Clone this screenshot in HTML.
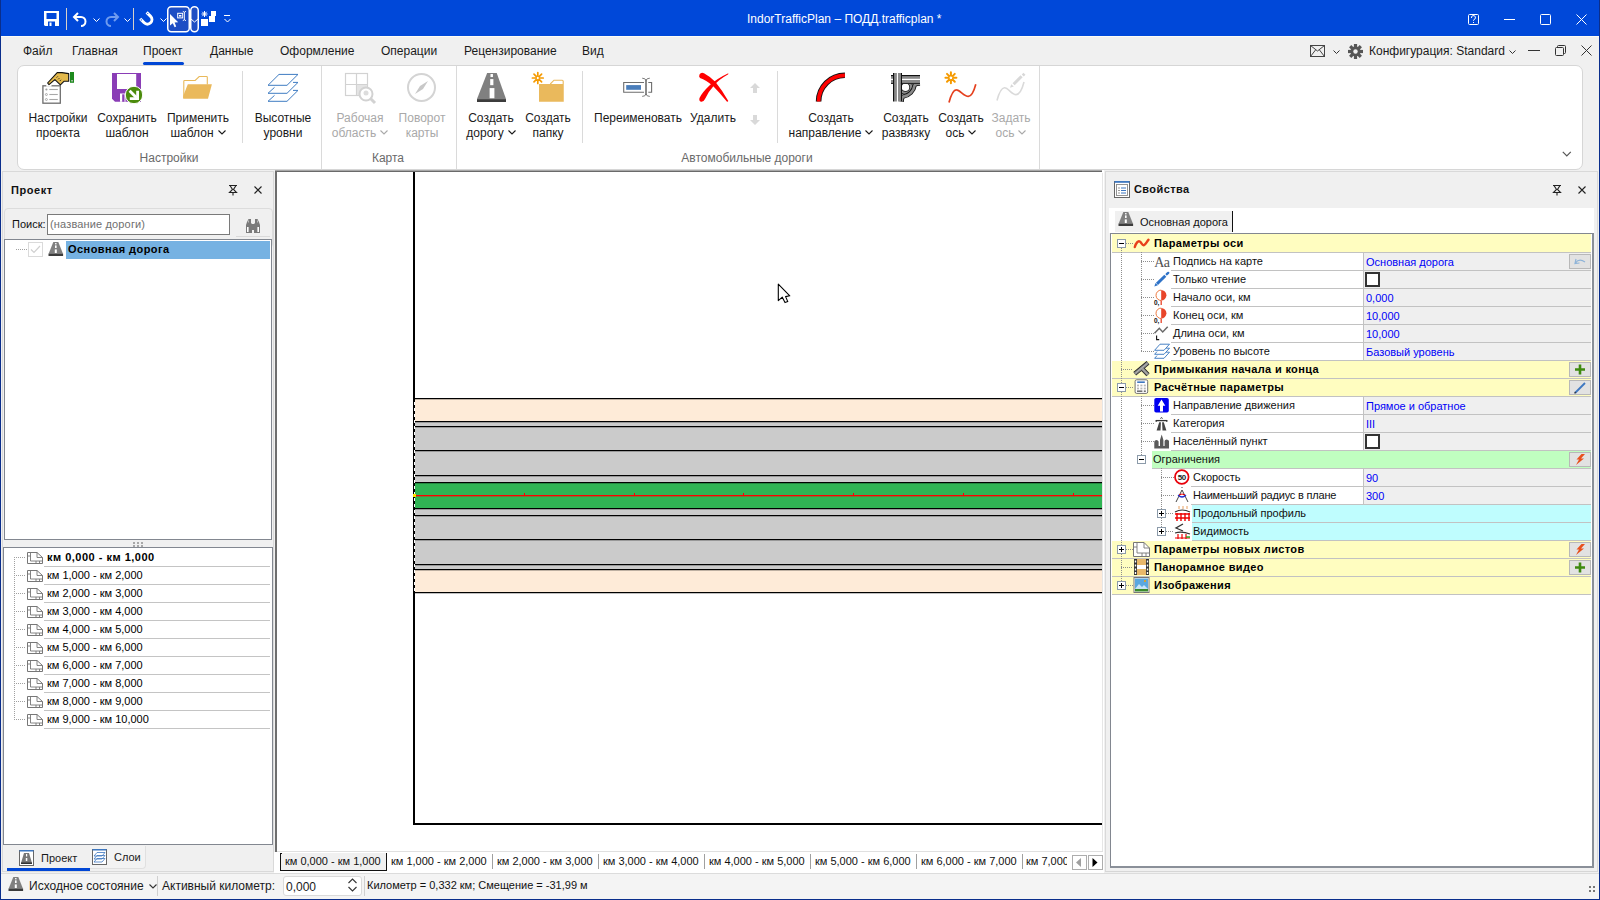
<!DOCTYPE html><html><head><meta charset="utf-8"><style>
html,body{margin:0;padding:0;width:1600px;height:900px;overflow:hidden;background:#F0F0F0;}
body{position:relative;font-family:"Liberation Sans", sans-serif;}
.t{position:absolute;white-space:nowrap;line-height:1;}
svg{overflow:visible;}
</style></head><body>
<div style="position:absolute;left:0px;top:0px;width:1600px;height:36px;background:#0048D9;"></div>
<div style="position:absolute;left:0px;top:0px;width:1px;height:900px;background:#0A2E8C;"></div>
<div style="position:absolute;left:1599px;top:0px;width:1px;height:900px;background:#0A2E8C;"></div>
<div style="position:absolute;left:0px;top:899px;width:1600px;height:1px;background:#0A2E8C;"></div>
<svg style="position:absolute;left:44px;top:11px;" width="16" height="16" viewBox="0 0 16 16"><path d="M0 0H15V15H1L0 14Z" fill="#fff"/><rect x="2.5" y="2" width="10" height="6" fill="#0048D9"/><rect x="4" y="10.5" width="7" height="4.5" fill="#0048D9"/><rect x="5.5" y="11.5" width="2" height="3.5" fill="#fff"/></svg>
<div style="position:absolute;left:66px;top:8px;width:1px;height:22px;background:#D8D0C8;"></div>
<svg style="position:absolute;left:72px;top:11px;" width="16" height="16" viewBox="0 0 16 16"><path d="M6 2 L2 6 L6 10 M2.5 6 H9 A4.5 4.5 0 0 1 9 15" fill="none" stroke="#fff" stroke-width="2"/></svg>
<svg style="position:absolute;left:93px;top:18px;" width="7" height="4" viewBox="0 0 7 4"><path d="M0.5 0.5 L3.5 3.5 L6.5 0.5" fill="none" stroke="#fff" stroke-width="1"/></svg>
<svg style="position:absolute;left:104px;top:11px;" width="16" height="16" viewBox="0 0 16 16"><path d="M10 2 L14 6 L10 10 M13.5 6 H7 A4.5 4.5 0 0 0 7 15" fill="none" stroke="#6E9BEF" stroke-width="2"/></svg>
<svg style="position:absolute;left:124px;top:18px;" width="7" height="4" viewBox="0 0 7 4"><path d="M0.5 0.5 L3.5 3.5 L6.5 0.5" fill="none" stroke="#fff" stroke-width="1"/></svg>
<div style="position:absolute;left:133px;top:8px;width:1px;height:22px;background:#D8D0C8;"></div>
<svg style="position:absolute;left:137px;top:10px;" width="16" height="16" viewBox="0 0 16 16"><path d="M3.2 8.8 L7.2 12.8 A 4.5 4.5 0 0 0 13.6 6.4 L9.6 2.4" fill="none" stroke="#fff" stroke-width="3"/><circle cx="4.3" cy="9.9" r="0.6" fill="#0048D9"/><circle cx="10.7" cy="3.5" r="0.6" fill="#0048D9"/></svg>
<svg style="position:absolute;left:160px;top:18px;" width="7" height="4" viewBox="0 0 7 4"><path d="M0.5 0.5 L3.5 3.5 L6.5 0.5" fill="none" stroke="#fff" stroke-width="1"/></svg>
<svg style="position:absolute;left:167px;top:6px;" width="23" height="27" viewBox="0 0 23 27"><rect x="0.75" y="0.75" width="21.5" height="25" rx="3.5" fill="#1E4EC4" stroke="#fff" stroke-width="1.5"/><path d="M3 8 V19.5 L5.8 17.2 L7.6 21.2 L9.2 20.6 L7.6 16.6 L11.2 16.2 Z" fill="#fff"/><rect x="10.7" y="7.3" width="5" height="4.6" fill="none" stroke="#fff" stroke-width="1"/><rect x="12" y="9" width="2.4" height="1.6" fill="#fff"/><path d="M15.8 5.4 Q17.2 5.4 17.4 6.8 V13.2 Q17.2 14.6 15.8 14.6 M19 5.4 Q17.6 5.4 17.4 6.8 M17.4 13.2 Q17.6 14.6 19 14.6" fill="none" stroke="#fff" stroke-width="0.9"/></svg>
<svg style="position:absolute;left:190px;top:6px;" width="9" height="27" viewBox="0 0 9 27"><rect x="0.75" y="0.75" width="7.5" height="25" rx="3.7" fill="#1E4EC4" stroke="#fff" stroke-width="1.5"/><path d="M1 13 L4.5 16 L8 13" fill="none" stroke="#fff" stroke-width="1"/></svg>
<svg style="position:absolute;left:201px;top:11px;" width="16" height="16" viewBox="0 0 16 16"><rect x="0" y="8" width="7" height="7" fill="#fff"/><rect x="8" y="5" width="6" height="6" fill="#fff"/><rect x="10" y="0" width="5" height="5" fill="#fff"/><path d="M3.5 0 V6 M0.5 3 H6.5 M1.3 0.8 L5.7 5.2 M5.7 0.8 L1.3 5.2" stroke="#fff" stroke-width="1"/></svg>
<svg style="position:absolute;left:224px;top:15px;" width="7" height="8" viewBox="0 0 7 8"><path d="M0 0.5 H6 M0.5 4 L3.5 7 L6.5 4" fill="none" stroke="#fff" stroke-width="1"/></svg>
<div class="t" style="left:747px;top:13px;font-size:12px;color:#fff;font-weight:normal;">IndorTrafficPlan – ПОДД.trafficplan *</div>
<svg style="position:absolute;left:1468px;top:14px;" width="11" height="11" viewBox="0 0 11 11"><rect x="0.5" y="0.5" width="10" height="10" rx="1" fill="none" stroke="#fff" stroke-width="1"/><path d="M3.5 4 A2 2 0 1 1 6 5.5 L5.5 6.5 V7" fill="none" stroke="#fff" stroke-width="1"/><rect x="5" y="8" width="1" height="1" fill="#fff"/></svg>
<div style="position:absolute;left:1504px;top:19px;width:11px;height:1px;background:#fff;"></div>
<svg style="position:absolute;left:1540px;top:14px;" width="11" height="11" viewBox="0 0 11 11"><rect x="0.5" y="0.5" width="10" height="10" rx="1" fill="none" stroke="#fff" stroke-width="1"/></svg>
<svg style="position:absolute;left:1576px;top:14px;" width="11" height="11" viewBox="0 0 11 11"><path d="M0.5 0.5 L10.5 10.5 M10.5 0.5 L0.5 10.5" stroke="#fff" stroke-width="1"/></svg>
<div style="position:absolute;left:1px;top:36px;width:1598px;height:1px;background:#FCFCF6;"></div>
<div class="t" style="left:23px;top:45px;font-size:12px;color:#1A1A1A;font-weight:normal;">Файл</div>
<div class="t" style="left:72px;top:45px;font-size:12px;color:#1A1A1A;font-weight:normal;">Главная</div>
<div class="t" style="left:143px;top:45px;font-size:12px;color:#1A1A1A;font-weight:normal;">Проект</div>
<div class="t" style="left:210px;top:45px;font-size:12px;color:#1A1A1A;font-weight:normal;">Данные</div>
<div class="t" style="left:280px;top:45px;font-size:12px;color:#1A1A1A;font-weight:normal;">Оформление</div>
<div class="t" style="left:381px;top:45px;font-size:12px;color:#1A1A1A;font-weight:normal;">Операции</div>
<div class="t" style="left:464px;top:45px;font-size:12px;color:#1A1A1A;font-weight:normal;">Рецензирование</div>
<div class="t" style="left:582px;top:45px;font-size:12px;color:#1A1A1A;font-weight:normal;">Вид</div>
<div style="position:absolute;left:143px;top:62px;width:41px;height:3px;background:#0046D5;border-radius:2px;"></div>
<svg style="position:absolute;left:1310px;top:45px;" width="16" height="12" viewBox="0 0 16 12"><rect x="0.5" y="0.5" width="14" height="11" fill="none" stroke="#444" stroke-width="1"/><path d="M0.5 0.5 L7.5 6 L14.5 0.5 M0.5 11.5 L5.5 5 M14.5 11.5 L9.5 5" fill="none" stroke="#444" stroke-width="1"/></svg>
<svg style="position:absolute;left:1333px;top:50px;" width="7" height="4" viewBox="0 0 7 4"><path d="M0.5 0.5 L3.5 3.5 L6.5 0.5" fill="none" stroke="#333" stroke-width="1"/></svg>
<svg style="position:absolute;left:1348px;top:44px;" width="15" height="15" viewBox="0 0 15 15"><g transform="translate(7.5,7.5)"><circle r="5" fill="#555"/><g fill="#555"><rect x="-1.6" y="-7.5" width="3.2" height="4" transform="rotate(0)"/><rect x="-1.6" y="-7.5" width="3.2" height="4" transform="rotate(45)"/><rect x="-1.6" y="-7.5" width="3.2" height="4" transform="rotate(90)"/><rect x="-1.6" y="-7.5" width="3.2" height="4" transform="rotate(135)"/><rect x="-1.6" y="-7.5" width="3.2" height="4" transform="rotate(180)"/><rect x="-1.6" y="-7.5" width="3.2" height="4" transform="rotate(225)"/><rect x="-1.6" y="-7.5" width="3.2" height="4" transform="rotate(270)"/><rect x="-1.6" y="-7.5" width="3.2" height="4" transform="rotate(315)"/></g><circle r="2.2" fill="#F0F0F0"/></g></svg>
<div class="t" style="left:1369px;top:45px;font-size:12px;color:#1A1A1A;font-weight:normal;">Конфигурация: Standard</div>
<svg style="position:absolute;left:1509px;top:50px;" width="7" height="4" viewBox="0 0 7 4"><path d="M0.5 0.5 L3.5 3.5 L6.5 0.5" fill="none" stroke="#333" stroke-width="1"/></svg>
<div style="position:absolute;left:1528px;top:50px;width:12px;height:1px;background:#333;"></div>
<svg style="position:absolute;left:1555px;top:45px;" width="11" height="11" viewBox="0 0 11 11"><rect x="0.5" y="2.5" width="8" height="8" rx="1" fill="none" stroke="#333"/><path d="M2.5 2.5 V1.5 Q2.5 0.5 3.5 0.5 H9.5 Q10.5 0.5 10.5 1.5 V7.5 Q10.5 8.5 9.5 8.5 H8.5" fill="none" stroke="#333"/></svg>
<svg style="position:absolute;left:1581px;top:45px;" width="11" height="11" viewBox="0 0 11 11"><path d="M0.5 0.5 L10.5 10.5 M10.5 0.5 L0.5 10.5" stroke="#333" stroke-width="1"/></svg>
<div style="position:absolute;left:17px;top:65px;width:1566px;height:105px;background:#fff;border:1px solid #D6D6D6;border-radius:7px;box-sizing:border-box;"></div>
<div style="position:absolute;left:242px;top:71px;width:1px;height:72px;background:#DADADA;"></div>
<div style="position:absolute;left:582px;top:71px;width:1px;height:72px;background:#DADADA;"></div>
<div style="position:absolute;left:777px;top:71px;width:1px;height:72px;background:#DADADA;"></div>
<div style="position:absolute;left:321px;top:66px;width:1px;height:103px;background:#DADADA;"></div>
<div style="position:absolute;left:456px;top:66px;width:1px;height:103px;background:#DADADA;"></div>
<div style="position:absolute;left:1039px;top:66px;width:1px;height:103px;background:#DADADA;"></div>
<div class="t" style="left:19px;width:300px;text-align:center;top:152px;font-size:12px;color:#6A6A6A;font-weight:normal;">Настройки</div>
<div class="t" style="left:238px;width:300px;text-align:center;top:152px;font-size:12px;color:#6A6A6A;font-weight:normal;">Карта</div>
<div class="t" style="left:597px;width:300px;text-align:center;top:152px;font-size:12px;color:#6A6A6A;font-weight:normal;">Автомобильные дороги</div>
<svg style="position:absolute;left:38px;top:68px;" width="40" height="40" viewBox="0 0 40 40">
<rect x="4.9" y="17.8" width="17.4" height="17.4" fill="#fff" stroke="#6E6E6E" stroke-width="1.3"/>
<rect x="8.3" y="16.5" width="5.2" height="2.2" fill="#fff"/>
<circle cx="8.4" cy="21.5" r="1.1" fill="#A0A0A0"/><path d="M11.3 21.5 H19.8" stroke="#A8A8A8" stroke-width="1.1"/>
<circle cx="8.4" cy="26.5" r="1" fill="#fff" stroke="#999" stroke-width="0.8"/><path d="M11.3 26.5 H19.8" stroke="#A8A8A8" stroke-width="1.1"/>
<circle cx="8.4" cy="31.5" r="1" fill="#fff" stroke="#999" stroke-width="0.8"/><path d="M11.3 31.5 H19.8" stroke="#A8A8A8" stroke-width="1.1"/>
<path d="M9.6 15 L19.2 4.6 H24 L30.7 5.6 V13.2 H26.2 L22.4 16.8 L16.9 11.6 L11 16.6 Z" fill="#E3B94C" stroke="#111" stroke-width="1.1" stroke-linejoin="round"/>
<path d="M18.6 9.6 L19.8 8.4 M20.2 11.3 L21.4 10.1 M21.8 13 L23 11.8" stroke="#222" stroke-width="0.9"/>
<rect x="32" y="4" width="4" height="10.8" fill="#1E8A1E"/><rect x="33.3" y="12" width="1.5" height="1.5" fill="#C8C8C8"/>
</svg>
<div class="t" style="left:-92px;width:300px;text-align:center;top:112px;font-size:12px;color:#1A1A1A;font-weight:normal;">Настройки</div>
<div class="t" style="left:-92px;width:300px;text-align:center;top:127px;font-size:12px;color:#1A1A1A;font-weight:normal;">проекта</div>
<svg style="position:absolute;left:106px;top:68px;" width="40" height="40" viewBox="0 0 40 40">
<path d="M6 5 H35 V33.8 H9 L6 30.8 Z" fill="#8A3DB6"/>
<rect x="11" y="6" width="19.2" height="15" fill="#fff"/>
<rect x="14" y="25.5" width="5.5" height="8.3" fill="#fff"/><rect x="16.2" y="26.3" width="2.3" height="7.5" fill="#8A3DB6"/>
<circle cx="28" cy="27" r="8.7" fill="#4B8B0C" stroke="#fff" stroke-width="1"/>
<path d="M23.6 22.8 L30.3 29.5" stroke="#fff" stroke-width="3"/>
<path d="M23.8 30.6 H31.6 V22.8" fill="none" stroke="#fff" stroke-width="2.8"/>
</svg>
<div class="t" style="left:-23px;width:300px;text-align:center;top:112px;font-size:12px;color:#1A1A1A;font-weight:normal;">Сохранить</div>
<div class="t" style="left:-23px;width:300px;text-align:center;top:127px;font-size:12px;color:#1A1A1A;font-weight:normal;">шаблон</div>
<svg style="position:absolute;left:178px;top:68px;" width="40" height="40" viewBox="0 0 40 40">
<path d="M5.8 30 V13.3 Q5.8 12.5 6.6 12.5 H17.2 L21.2 8.5 H28.5 Q29.3 8.5 29.3 9.3 V16.5" fill="none" stroke="#E9B95A" stroke-width="1.1"/>
<path d="M9.8 16.2 H33.9 L30 30.8 H5.2 V28 Z" fill="#EAB95C"/>
</svg>
<div class="t" style="left:48px;width:300px;text-align:center;top:112px;font-size:12px;color:#1A1A1A;font-weight:normal;">Применить</div>
<div class="t" style="left:48px;width:300px;text-align:center;top:127px;font-size:12px;color:#1A1A1A;font-weight:normal;">шаблон<svg width="8" height="5" style="display:inline-block;vertical-align:middle;margin-left:4px;margin-top:-2px" viewBox="0 0 8 5"><path d="M0.5 0.5 L4 4 L7.5 0.5" fill="none" stroke="#1A1A1A" stroke-width="1.1"/></svg></div>
<svg style="position:absolute;left:263px;top:68px;" width="40" height="40" viewBox="0 0 40 40">
<g fill="none" stroke="#3F7CC2" stroke-width="1">
<path d="M16 6.4 H35 L24 17.3 H5 Z"/>
<path d="M11.5 19.4 L5 25.3 H24 L35 14.4 H30"/>
<path d="M11.5 27.4 L5 33.3 H24 L35 22.4 H30"/>
</g>
</svg>
<div class="t" style="left:133px;width:300px;text-align:center;top:112px;font-size:12px;color:#1A1A1A;font-weight:normal;">Высотные</div>
<div class="t" style="left:133px;width:300px;text-align:center;top:127px;font-size:12px;color:#1A1A1A;font-weight:normal;">уровни</div>
<svg style="position:absolute;left:344px;top:72px;" width="34" height="34" viewBox="0 0 34 34">
<rect x="1.5" y="1.5" width="22" height="22" fill="none" stroke="#D2D2D2" stroke-width="1.2"/>
<path d="M12.5 1.5 V23.5 M1.5 12.5 H23.5" stroke="#D2D2D2" stroke-width="1.2"/>
<rect x="13" y="13" width="10" height="10" fill="#E4E4E4"/>
<circle cx="22" cy="22" r="6.5" fill="#fff" stroke="#D2D2D2" stroke-width="2"/>
<circle cx="22" cy="21" r="2.5" fill="#DDDDDD"/>
<path d="M26.5 26.5 L31 31" stroke="#D2D2D2" stroke-width="3"/>
</svg>
<div class="t" style="left:210px;width:300px;text-align:center;top:112px;font-size:12px;color:#A9A9A9;font-weight:normal;">Рабочая</div>
<div class="t" style="left:210px;width:300px;text-align:center;top:127px;font-size:12px;color:#A9A9A9;font-weight:normal;">область<svg width="8" height="5" style="display:inline-block;vertical-align:middle;margin-left:4px;margin-top:-2px" viewBox="0 0 8 5"><path d="M0.5 0.5 L4 4 L7.5 0.5" fill="none" stroke="#A9A9A9" stroke-width="1.1"/></svg></div>
<svg style="position:absolute;left:406px;top:72px;" width="31" height="31" viewBox="0 0 31 31">
<circle cx="15.5" cy="15.5" r="13.5" fill="none" stroke="#D4D4D4" stroke-width="2"/>
<path d="M22 9 L17 17 L9 22 L14 14 Z" fill="#C8C8C8"/>
</svg>
<div class="t" style="left:272px;width:300px;text-align:center;top:112px;font-size:12px;color:#A9A9A9;font-weight:normal;">Поворот</div>
<div class="t" style="left:272px;width:300px;text-align:center;top:127px;font-size:12px;color:#A9A9A9;font-weight:normal;">карты</div>
<svg style="position:absolute;left:477px;top:73px;" width="29" height="29" viewBox="0 0 29 29">
<path d="M10.149999999999999 0 H19.720000000000002 L29 26.1 H0 Z" fill="#808080"/>
<rect x="0" y="26.1" width="29" height="2.9000000000000004" fill="#3C3C3C"/>
<rect x="13.485000000000001" y="1.0150000000000001" width="2.4650000000000003" height="3.045" fill="#fff"/>
<rect x="13.195" y="6.09" width="3.19" height="6.09" fill="#fff"/>
<rect x="12.615" y="15.08" width="4.785" height="10.149999999999999" fill="#fff"/>
</svg>
<div class="t" style="left:341px;width:300px;text-align:center;top:112px;font-size:12px;color:#1A1A1A;font-weight:normal;">Создать</div>
<div class="t" style="left:341px;width:300px;text-align:center;top:127px;font-size:12px;color:#1A1A1A;font-weight:normal;">дорогу<svg width="8" height="5" style="display:inline-block;vertical-align:middle;margin-left:4px;margin-top:-2px" viewBox="0 0 8 5"><path d="M0.5 0.5 L4 4 L7.5 0.5" fill="none" stroke="#1A1A1A" stroke-width="1.1"/></svg></div>
<svg style="position:absolute;left:531px;top:71px;" width="36" height="34" viewBox="0 0 36 34">
<g stroke="#F59A00" stroke-width="1.7" stroke-linecap="round"><path d="M6.8 1.6 V12.4 M1.4 7 H12.2 M3 3.2 L10.6 10.8 M10.6 3.2 L3 10.8"/></g>
<circle cx="6.8" cy="7" r="1.6" fill="#fff" stroke="#F59A00" stroke-width="0.9"/>
<rect x="8" y="13" width="24.75" height="17.75" fill="#EAB95C"/>
<path d="M19.25 13 L23 9.2 H31.2 Q32.2 9.2 32.2 10.2 V13" fill="none" stroke="#EAB95C" stroke-width="1.1"/>
</svg>
<div class="t" style="left:398px;width:300px;text-align:center;top:112px;font-size:12px;color:#1A1A1A;font-weight:normal;">Создать</div>
<div class="t" style="left:398px;width:300px;text-align:center;top:127px;font-size:12px;color:#1A1A1A;font-weight:normal;">папку</div>
<svg style="position:absolute;left:616px;top:68px;" width="40" height="40" viewBox="0 0 40 40">
<path d="M28 14.5 H7.7 V24.3 H28" fill="none" stroke="#6E6E6E" stroke-width="1.1"/>
<rect x="10.2" y="17.1" width="14.8" height="4.7" fill="#4A7EBB"/>
<path d="M32.3 14.5 H35.6 V24.3 H32.3" fill="none" stroke="#6E6E6E" stroke-width="1.1"/>
<path d="M30 11.5 V27" stroke="#6E6E6E" stroke-width="1.6"/>
<path d="M26.2 10.2 Q29.5 10.2 30 12.5 Q30.5 10.2 33.8 10.2 M26.2 28.4 Q29.5 28.4 30 26 Q30.5 28.4 33.8 28.4" fill="none" stroke="#6E6E6E" stroke-width="0.9"/>
</svg>
<div class="t" style="left:488px;width:300px;text-align:center;top:112px;font-size:12px;color:#1A1A1A;font-weight:normal;">Переименовать</div>
<svg style="position:absolute;left:696px;top:68px;" width="40" height="40" viewBox="0 0 40 40">
<path d="M3.5 6.5 Q5 4 8 5.3 Q14 8.5 19.5 14 Q26 22 32.3 33 Q31.5 34.2 30.8 33.5 Q24 25 17 18 Q10 12 4 10 Q2.5 8.5 3.5 6.5 Z" fill="#FF0000"/>
<path d="M32.3 5.2 Q32.6 6.2 31.5 6.8 Q23 11.5 18 17.5 Q12 24 9 31 Q7.5 34.2 5 33.8 Q2.7 33 3.5 30 Q6 24.5 14 17 Q21 10.5 32.3 5.2 Z" fill="#FF0000"/>
</svg>
<div class="t" style="left:563px;width:300px;text-align:center;top:112px;font-size:12px;color:#1A1A1A;font-weight:normal;">Удалить</div>
<svg style="position:absolute;left:749px;top:82px;" width="12" height="12" viewBox="0 0 12 12"><path d="M6 1 L11 6 H8 V11 H4 V6 H1 Z" fill="#D9D9D9"/></svg>
<svg style="position:absolute;left:749px;top:114px;" width="12" height="12" viewBox="0 0 12 12"><path d="M6 11 L11 6 H8 V1 H4 V6 H1 Z" fill="#D9D9D9"/></svg>
<svg style="position:absolute;left:810px;top:68px;" width="40" height="40" viewBox="0 0 40 40">
<path d="M8.6 33.6 A 26.3 26.3 0 0 1 34.9 7.3" fill="none" stroke="#111" stroke-width="5.6"/>
<path d="M8.6 33.6 A 26.3 26.3 0 0 1 34.9 7.3" fill="none" stroke="#FF0000" stroke-width="3.8"/>
</svg>
<div class="t" style="left:681px;width:300px;text-align:center;top:112px;font-size:12px;color:#1A1A1A;font-weight:normal;">Создать</div>
<div class="t" style="left:681px;width:300px;text-align:center;top:127px;font-size:12px;color:#1A1A1A;font-weight:normal;">направление<svg width="8" height="5" style="display:inline-block;vertical-align:middle;margin-left:4px;margin-top:-2px" viewBox="0 0 8 5"><path d="M0.5 0.5 L4 4 L7.5 0.5" fill="none" stroke="#1A1A1A" stroke-width="1.1"/></svg></div>
<svg style="position:absolute;left:886px;top:68px;" width="40" height="40" viewBox="0 0 40 40">
<g fill="none">
<circle cx="19.5" cy="19.2" r="5.7" stroke="#111" stroke-width="3.8"/>
<circle cx="19.5" cy="19.2" r="5.7" stroke="#8A8A8A" stroke-width="2.2"/>
<path d="M15.6 33.8 Q 15.8 29.6 17.2 28.6 A 13.4 13.4 0 0 0 28.6 17.2 Q 29.6 15.8 34 15.6" stroke="#111" stroke-width="4.4"/>
<path d="M15.6 33.8 Q 15.8 29.6 17.2 28.6 A 13.4 13.4 0 0 0 28.6 17.2 Q 29.6 15.8 34 15.6" stroke="#8A8A8A" stroke-width="2.6"/>
</g>
<rect x="7" y="5" width="9" height="28.5" fill="#fff"/>
<rect x="8" y="5" width="2.9" height="28.5" fill="#8A8A8A"/><rect x="12" y="5" width="2.9" height="28.5" fill="#8A8A8A"/>
<rect x="7" y="5" width="1.1" height="28.5" fill="#111"/><rect x="14.9" y="5" width="1.1" height="28.5" fill="#111"/>
<rect x="16" y="7" width="18" height="9" fill="#fff"/>
<rect x="16" y="8" width="18" height="2.8" fill="#8A8A8A"/><rect x="16" y="12" width="18" height="2.8" fill="#8A8A8A"/>
<rect x="16" y="7" width="18" height="1.1" fill="#111"/><rect x="14.9" y="14.8" width="19.1" height="1.1" fill="#111"/>
<rect x="5" y="8" width="2" height="2.8" fill="#8A8A8A"/><rect x="5" y="12" width="2" height="2.8" fill="#8A8A8A"/>
<rect x="5" y="7" width="2" height="1.1" fill="#111"/><rect x="5" y="14.8" width="2" height="1.1" fill="#111"/>
</svg>
<div class="t" style="left:756px;width:300px;text-align:center;top:112px;font-size:12px;color:#1A1A1A;font-weight:normal;">Создать</div>
<div class="t" style="left:756px;width:300px;text-align:center;top:127px;font-size:12px;color:#1A1A1A;font-weight:normal;">развязку</div>
<svg style="position:absolute;left:940px;top:68px;" width="40" height="40" viewBox="0 0 40 40">
<g stroke="#F59A00" stroke-width="2" stroke-linecap="round"><path d="M10.9 4.3 V15.3 M5.4 9.8 H16.4 M7 5.9 L14.8 13.7 M14.8 5.9 L7 13.7"/></g>
<circle cx="10.9" cy="9.8" r="1.9" fill="#fff" stroke="#F59A00" stroke-width="1"/>
<path d="M9 34.5 C 11 27, 13 21.5, 16.5 21.8 C 20 22, 24 28.5, 28.4 28.4 C 32 28.3, 34 23, 35.8 16.3" fill="none" stroke="#E5401E" stroke-width="1.7"/>
</svg>
<div class="t" style="left:811px;width:300px;text-align:center;top:112px;font-size:12px;color:#1A1A1A;font-weight:normal;">Создать</div>
<div class="t" style="left:811px;width:300px;text-align:center;top:127px;font-size:12px;color:#1A1A1A;font-weight:normal;">ось<svg width="8" height="5" style="display:inline-block;vertical-align:middle;margin-left:4px;margin-top:-2px" viewBox="0 0 8 5"><path d="M0.5 0.5 L4 4 L7.5 0.5" fill="none" stroke="#1A1A1A" stroke-width="1.1"/></svg></div>
<svg style="position:absolute;left:990px;top:68px;" width="40" height="40" viewBox="0 0 40 40">
<path d="M7 32.5 C 9 25, 11 20, 14.5 19.8 C 18 19.6, 22 26.8, 26 26.6 C 30 26.4, 32.5 20, 34 14" fill="none" stroke="#DADADA" stroke-width="1.6"/>
<path d="M20 19.8 L21.3 16.2 L23.8 18.5 Z" fill="#D8D8D8"/>
<path d="M23.6 16.2 L31.6 8.2" stroke="#D8D8D8" stroke-width="3"/>
<path d="M32.6 5.6 L34.6 7.6" stroke="#D8D8D8" stroke-width="2.4"/>
</svg>
<div class="t" style="left:861px;width:300px;text-align:center;top:112px;font-size:12px;color:#A9A9A9;font-weight:normal;">Задать</div>
<div class="t" style="left:861px;width:300px;text-align:center;top:127px;font-size:12px;color:#A9A9A9;font-weight:normal;">ось<svg width="8" height="5" style="display:inline-block;vertical-align:middle;margin-left:4px;margin-top:-2px" viewBox="0 0 8 5"><path d="M0.5 0.5 L4 4 L7.5 0.5" fill="none" stroke="#A9A9A9" stroke-width="1.1"/></svg></div>
<svg style="position:absolute;left:1562px;top:151px;" width="10" height="6" viewBox="0 0 10 6"><path d="M0.8 0.8 L4.8 4.8 L8.8 0.8" fill="none" stroke="#555" stroke-width="1.2"/></svg>
<div style="position:absolute;left:1px;top:171px;width:275px;height:702px;background:#F0F0F0;"></div>
<div style="position:absolute;left:2px;top:171px;width:272px;height:1px;background:#D9D9D9;"></div>
<div style="position:absolute;left:2px;top:171px;width:1px;height:700px;background:#D9D9D9;"></div>
<div style="position:absolute;left:273px;top:171px;width:1px;height:701px;background:#D9D9D9;"></div>
<div style="position:absolute;left:2px;top:871px;width:272px;height:1px;background:#D9D9D9;"></div>
<div class="t" style="left:11px;top:185px;font-size:11px;color:#111;font-weight:bold;letter-spacing:0.55px;">Проект</div>
<svg style="position:absolute;left:228px;top:185px;" width="10" height="11" viewBox="0 0 10 11"><path d="M1 0.5 H9 M2 0.5 L4.5 4.5 L1.5 7.5 H8.5 L5.5 4.5 L8 0.5 M5 7.5 V10.5" fill="none" stroke="#222" stroke-width="1.1"/></svg>
<svg style="position:absolute;left:254px;top:186px;" width="8" height="8" viewBox="0 0 8 8"><path d="M0.5 0.5 L7.5 7.5 M7.5 0.5 L0.5 7.5" stroke="#222" stroke-width="1.1"/></svg>
<div style="position:absolute;left:4px;top:208px;width:269px;height:40px;border:1px solid #DCDCDC;border-radius:4px;background:#F0F0F0;box-sizing:border-box;"></div>
<div class="t" style="left:12px;top:219px;font-size:11px;color:#111;font-weight:normal;">Поиск:</div>
<div style="position:absolute;left:47px;top:214px;width:183px;height:21px;background:#fff;border:1px solid #7A7A7A;box-sizing:border-box;"></div>
<div class="t" style="left:50px;top:219px;font-size:11px;color:#707070;font-weight:normal;letter-spacing:0.15px;">(название дороги)</div>
<svg style="position:absolute;left:245px;top:218px;" width="16" height="16" viewBox="0 0 16 16">
<path d="M2 4 L3.5 1 H6 V5 L7 6 V15 H1 V7 Z" fill="#7A7A7A"/>
<path d="M14 4 L12.5 1 H10 V5 L9 6 V15 H15 V7 Z" fill="#7A7A7A"/>
<rect x="6" y="6" width="4" height="6" fill="#7A7A7A"/>
<rect x="2" y="9" width="1.6" height="5" fill="#fff"/><rect x="12.4" y="9" width="1.6" height="5" fill="#fff"/>
<rect x="3" y="2.5" width="1" height="2" fill="#bbb"/><rect x="12" y="2.5" width="1" height="2" fill="#bbb"/>
</svg>
<div style="position:absolute;left:236px;top:236px;width:34px;height:1px;background:#DADADA;"></div>
<div style="position:absolute;left:4px;top:239px;width:268px;height:301px;background:#fff;border:1px solid #828790;box-sizing:border-box;"></div>
<svg style="position:absolute;left:16px;top:249px;" width="12" height="1" viewBox="0 0 12 1"><path d="M0 0.5 H12" stroke="#A0A0A0" stroke-dasharray="1 1"/></svg>
<div style="position:absolute;left:28px;top:242px;width:15px;height:15px;border:1px solid #DADADA;box-sizing:border-box;background:#fff;"></div>
<svg style="position:absolute;left:30px;top:245px;" width="11" height="9" viewBox="0 0 11 9"><path d="M1 4.5 L4 7.5 L10 1" fill="none" stroke="#D0D0D0" stroke-width="1.2"/></svg>
<svg style="position:absolute;left:48px;top:242px;" width="16" height="16" viewBox="0 0 16 16">
<path d="M5.3 0 H10.3 L15 11.8 H0.6 Z" fill="#808080"/>
<rect x="0.5" y="11.6" width="14.6" height="2.4" fill="#3C3C3C"/>
<rect x="7.1" y="1" width="1.4" height="1.4" fill="#fff"/>
<rect x="7" y="3.4" width="1.6" height="2.6" fill="#fff"/>
<rect x="6.8" y="7.4" width="2" height="3.6" fill="#fff"/>
</svg>
<div style="position:absolute;left:66px;top:241px;width:204px;height:18px;background:#76B2E2;"></div>
<div class="t" style="left:68px;top:244px;font-size:11px;color:#000;font-weight:bold;letter-spacing:0.45px;">Основная дорога</div>
<div style="position:absolute;left:133px;top:542px;width:2px;height:2px;background:#A8A8A8;"></div>
<div style="position:absolute;left:133px;top:545px;width:2px;height:2px;background:#A8A8A8;"></div>
<div style="position:absolute;left:137px;top:542px;width:2px;height:2px;background:#A8A8A8;"></div>
<div style="position:absolute;left:137px;top:545px;width:2px;height:2px;background:#A8A8A8;"></div>
<div style="position:absolute;left:141px;top:542px;width:2px;height:2px;background:#A8A8A8;"></div>
<div style="position:absolute;left:141px;top:545px;width:2px;height:2px;background:#A8A8A8;"></div>
<div style="position:absolute;left:3px;top:547px;width:270px;height:298px;background:#fff;border:1px solid #828790;box-sizing:border-box;"></div>
<svg style="position:absolute;left:14px;top:557px;" width="1" height="162" viewBox="0 0 1 162"><path d="M0.5 0 V162" stroke="#A0A0A0" stroke-dasharray="1 1"/></svg>
<svg style="position:absolute;left:14px;top:557px;" width="12" height="1" viewBox="0 0 12 1"><path d="M0 0.5 H12" stroke="#A0A0A0" stroke-dasharray="1 1"/></svg>
<svg style="position:absolute;left:27px;top:552px;" width="16" height="12" viewBox="0 0 16 12"><path d="M0.5 0.5 H10 L15.5 5.5 V11.5 H0.5 Z" fill="#fff" stroke="#777" stroke-width="1"/><path d="M10 0.5 V5.5 H15.5" fill="none" stroke="#777" stroke-width="0.9"/><path d="M3.5 0.5 V9 M3.5 9 H15.5 M0.5 4 H3.5 M9 9 V11.5 M12.5 9 V11.5" fill="none" stroke="#777" stroke-width="0.9"/></svg>
<div class="t" style="left:47px;top:552px;font-size:11px;color:#000;font-weight:bold;letter-spacing:0.5px;">км 0,000 - км 1,000</div>
<div style="position:absolute;left:44px;top:566px;width:226px;height:1px;background:#C4C4C4;"></div>
<svg style="position:absolute;left:14px;top:575px;" width="12" height="1" viewBox="0 0 12 1"><path d="M0 0.5 H12" stroke="#A0A0A0" stroke-dasharray="1 1"/></svg>
<svg style="position:absolute;left:27px;top:570px;" width="16" height="12" viewBox="0 0 16 12"><path d="M0.5 0.5 H10 L15.5 5.5 V11.5 H0.5 Z" fill="#fff" stroke="#777" stroke-width="1"/><path d="M10 0.5 V5.5 H15.5" fill="none" stroke="#777" stroke-width="0.9"/><path d="M3.5 0.5 V9 M3.5 9 H15.5 M0.5 4 H3.5 M9 9 V11.5 M12.5 9 V11.5" fill="none" stroke="#777" stroke-width="0.9"/></svg>
<div class="t" style="left:47px;top:570px;font-size:11px;color:#000;font-weight:normal;letter-spacing:0px;">км 1,000 - км 2,000</div>
<div style="position:absolute;left:44px;top:584px;width:226px;height:1px;background:#C4C4C4;"></div>
<svg style="position:absolute;left:14px;top:593px;" width="12" height="1" viewBox="0 0 12 1"><path d="M0 0.5 H12" stroke="#A0A0A0" stroke-dasharray="1 1"/></svg>
<svg style="position:absolute;left:27px;top:588px;" width="16" height="12" viewBox="0 0 16 12"><path d="M0.5 0.5 H10 L15.5 5.5 V11.5 H0.5 Z" fill="#fff" stroke="#777" stroke-width="1"/><path d="M10 0.5 V5.5 H15.5" fill="none" stroke="#777" stroke-width="0.9"/><path d="M3.5 0.5 V9 M3.5 9 H15.5 M0.5 4 H3.5 M9 9 V11.5 M12.5 9 V11.5" fill="none" stroke="#777" stroke-width="0.9"/></svg>
<div class="t" style="left:47px;top:588px;font-size:11px;color:#000;font-weight:normal;letter-spacing:0px;">км 2,000 - км 3,000</div>
<div style="position:absolute;left:44px;top:602px;width:226px;height:1px;background:#C4C4C4;"></div>
<svg style="position:absolute;left:14px;top:611px;" width="12" height="1" viewBox="0 0 12 1"><path d="M0 0.5 H12" stroke="#A0A0A0" stroke-dasharray="1 1"/></svg>
<svg style="position:absolute;left:27px;top:606px;" width="16" height="12" viewBox="0 0 16 12"><path d="M0.5 0.5 H10 L15.5 5.5 V11.5 H0.5 Z" fill="#fff" stroke="#777" stroke-width="1"/><path d="M10 0.5 V5.5 H15.5" fill="none" stroke="#777" stroke-width="0.9"/><path d="M3.5 0.5 V9 M3.5 9 H15.5 M0.5 4 H3.5 M9 9 V11.5 M12.5 9 V11.5" fill="none" stroke="#777" stroke-width="0.9"/></svg>
<div class="t" style="left:47px;top:606px;font-size:11px;color:#000;font-weight:normal;letter-spacing:0px;">км 3,000 - км 4,000</div>
<div style="position:absolute;left:44px;top:620px;width:226px;height:1px;background:#C4C4C4;"></div>
<svg style="position:absolute;left:14px;top:629px;" width="12" height="1" viewBox="0 0 12 1"><path d="M0 0.5 H12" stroke="#A0A0A0" stroke-dasharray="1 1"/></svg>
<svg style="position:absolute;left:27px;top:624px;" width="16" height="12" viewBox="0 0 16 12"><path d="M0.5 0.5 H10 L15.5 5.5 V11.5 H0.5 Z" fill="#fff" stroke="#777" stroke-width="1"/><path d="M10 0.5 V5.5 H15.5" fill="none" stroke="#777" stroke-width="0.9"/><path d="M3.5 0.5 V9 M3.5 9 H15.5 M0.5 4 H3.5 M9 9 V11.5 M12.5 9 V11.5" fill="none" stroke="#777" stroke-width="0.9"/></svg>
<div class="t" style="left:47px;top:624px;font-size:11px;color:#000;font-weight:normal;letter-spacing:0px;">км 4,000 - км 5,000</div>
<div style="position:absolute;left:44px;top:638px;width:226px;height:1px;background:#C4C4C4;"></div>
<svg style="position:absolute;left:14px;top:647px;" width="12" height="1" viewBox="0 0 12 1"><path d="M0 0.5 H12" stroke="#A0A0A0" stroke-dasharray="1 1"/></svg>
<svg style="position:absolute;left:27px;top:642px;" width="16" height="12" viewBox="0 0 16 12"><path d="M0.5 0.5 H10 L15.5 5.5 V11.5 H0.5 Z" fill="#fff" stroke="#777" stroke-width="1"/><path d="M10 0.5 V5.5 H15.5" fill="none" stroke="#777" stroke-width="0.9"/><path d="M3.5 0.5 V9 M3.5 9 H15.5 M0.5 4 H3.5 M9 9 V11.5 M12.5 9 V11.5" fill="none" stroke="#777" stroke-width="0.9"/></svg>
<div class="t" style="left:47px;top:642px;font-size:11px;color:#000;font-weight:normal;letter-spacing:0px;">км 5,000 - км 6,000</div>
<div style="position:absolute;left:44px;top:656px;width:226px;height:1px;background:#C4C4C4;"></div>
<svg style="position:absolute;left:14px;top:665px;" width="12" height="1" viewBox="0 0 12 1"><path d="M0 0.5 H12" stroke="#A0A0A0" stroke-dasharray="1 1"/></svg>
<svg style="position:absolute;left:27px;top:660px;" width="16" height="12" viewBox="0 0 16 12"><path d="M0.5 0.5 H10 L15.5 5.5 V11.5 H0.5 Z" fill="#fff" stroke="#777" stroke-width="1"/><path d="M10 0.5 V5.5 H15.5" fill="none" stroke="#777" stroke-width="0.9"/><path d="M3.5 0.5 V9 M3.5 9 H15.5 M0.5 4 H3.5 M9 9 V11.5 M12.5 9 V11.5" fill="none" stroke="#777" stroke-width="0.9"/></svg>
<div class="t" style="left:47px;top:660px;font-size:11px;color:#000;font-weight:normal;letter-spacing:0px;">км 6,000 - км 7,000</div>
<div style="position:absolute;left:44px;top:674px;width:226px;height:1px;background:#C4C4C4;"></div>
<svg style="position:absolute;left:14px;top:683px;" width="12" height="1" viewBox="0 0 12 1"><path d="M0 0.5 H12" stroke="#A0A0A0" stroke-dasharray="1 1"/></svg>
<svg style="position:absolute;left:27px;top:678px;" width="16" height="12" viewBox="0 0 16 12"><path d="M0.5 0.5 H10 L15.5 5.5 V11.5 H0.5 Z" fill="#fff" stroke="#777" stroke-width="1"/><path d="M10 0.5 V5.5 H15.5" fill="none" stroke="#777" stroke-width="0.9"/><path d="M3.5 0.5 V9 M3.5 9 H15.5 M0.5 4 H3.5 M9 9 V11.5 M12.5 9 V11.5" fill="none" stroke="#777" stroke-width="0.9"/></svg>
<div class="t" style="left:47px;top:678px;font-size:11px;color:#000;font-weight:normal;letter-spacing:0px;">км 7,000 - км 8,000</div>
<div style="position:absolute;left:44px;top:692px;width:226px;height:1px;background:#C4C4C4;"></div>
<svg style="position:absolute;left:14px;top:701px;" width="12" height="1" viewBox="0 0 12 1"><path d="M0 0.5 H12" stroke="#A0A0A0" stroke-dasharray="1 1"/></svg>
<svg style="position:absolute;left:27px;top:696px;" width="16" height="12" viewBox="0 0 16 12"><path d="M0.5 0.5 H10 L15.5 5.5 V11.5 H0.5 Z" fill="#fff" stroke="#777" stroke-width="1"/><path d="M10 0.5 V5.5 H15.5" fill="none" stroke="#777" stroke-width="0.9"/><path d="M3.5 0.5 V9 M3.5 9 H15.5 M0.5 4 H3.5 M9 9 V11.5 M12.5 9 V11.5" fill="none" stroke="#777" stroke-width="0.9"/></svg>
<div class="t" style="left:47px;top:696px;font-size:11px;color:#000;font-weight:normal;letter-spacing:0px;">км 8,000 - км 9,000</div>
<div style="position:absolute;left:44px;top:710px;width:226px;height:1px;background:#C4C4C4;"></div>
<svg style="position:absolute;left:14px;top:719px;" width="12" height="1" viewBox="0 0 12 1"><path d="M0 0.5 H12" stroke="#A0A0A0" stroke-dasharray="1 1"/></svg>
<svg style="position:absolute;left:27px;top:714px;" width="16" height="12" viewBox="0 0 16 12"><path d="M0.5 0.5 H10 L15.5 5.5 V11.5 H0.5 Z" fill="#fff" stroke="#777" stroke-width="1"/><path d="M10 0.5 V5.5 H15.5" fill="none" stroke="#777" stroke-width="0.9"/><path d="M3.5 0.5 V9 M3.5 9 H15.5 M0.5 4 H3.5 M9 9 V11.5 M12.5 9 V11.5" fill="none" stroke="#777" stroke-width="0.9"/></svg>
<div class="t" style="left:47px;top:714px;font-size:11px;color:#000;font-weight:normal;letter-spacing:0px;">км 9,000 - км 10,000</div>
<div style="position:absolute;left:44px;top:728px;width:226px;height:1px;background:#C4C4C4;"></div>
<div style="position:absolute;left:7px;top:846px;width:83px;height:25px;background:#F0F0F0;"></div>
<div style="position:absolute;left:7px;top:868px;width:83px;height:3px;background:#0046D5;"></div>
<svg style="position:absolute;left:19px;top:850px;" width="15" height="16" viewBox="0 0 15 16"><rect x="0.5" y="0.5" width="14" height="15" fill="#fff" stroke="#666" stroke-width="1"/><rect x="0.5" y="0" width="14" height="1.5" fill="#3D77C0"/><path d="M5 3 H10 L13 13 H2 Z" fill="#777"/><rect x="2" y="12.5" width="11" height="1.5" fill="#333"/><rect x="7" y="4" width="1.2" height="2.5" fill="#fff"/><rect x="6.8" y="8" width="1.5" height="3" fill="#fff"/></svg>
<div class="t" style="left:41px;top:853px;font-size:11px;color:#1A1A1A;font-weight:normal;">Проект</div>
<div style="position:absolute;left:90px;top:846px;width:56px;height:23px;background:#F3F3F3;border:1px solid #E0E0E0;border-top:none;border-left:none;border-radius:0 0 4px 0;box-sizing:border-box;"></div>
<svg style="position:absolute;left:92px;top:849px;" width="15" height="16" viewBox="0 0 15 16"><rect x="0.5" y="0.5" width="14" height="15" fill="#fff" stroke="#666" stroke-width="1"/><rect x="0.5" y="0" width="14" height="1.5" fill="#3D77C0"/><path d="M5 3.5 H13 L10 7 H2 Z M5 6.5 H13 L10 10 H2 Z M5 9.5 H13 L10 13 H2 Z" fill="none" stroke="#3D77C0" stroke-width="0.8"/></svg>
<div class="t" style="left:114px;top:852px;font-size:11px;color:#1A1A1A;font-weight:normal;">Слои</div>
<div style="position:absolute;left:276px;top:170px;width:828px;height:682px;background:#fff;"></div>
<div style="position:absolute;left:275px;top:170px;width:827px;height:1px;background:#A8A8A8;"></div>
<div style="position:absolute;left:275px;top:171px;width:827px;height:1px;background:#6A6A6A;"></div>
<div style="position:absolute;left:275px;top:171px;width:2px;height:681px;background:#6E6E6E;"></div>
<div style="position:absolute;left:1102px;top:173px;width:1px;height:679px;background:#E6E6E6;"></div>
<div style="position:absolute;left:277px;top:851px;width:826px;height:1px;background:#E0E0E0;"></div>
<div style="position:absolute;left:415px;top:399px;width:687px;height:22px;background:#FEEBD8;"></div>
<div style="position:absolute;left:415px;top:422px;width:687px;height:4px;background:#CBCBCB;"></div>
<div style="position:absolute;left:415px;top:427px;width:687px;height:23px;background:#CBCBCB;"></div>
<div style="position:absolute;left:415px;top:451px;width:687px;height:24px;background:#CBCBCB;"></div>
<div style="position:absolute;left:415px;top:476px;width:687px;height:6px;background:#CBCBCB;"></div>
<div style="position:absolute;left:415px;top:483px;width:687px;height:25px;background:#30B454;"></div>
<div style="position:absolute;left:415px;top:509px;width:687px;height:6px;background:#CBCBCB;"></div>
<div style="position:absolute;left:415px;top:516px;width:687px;height:23px;background:#CBCBCB;"></div>
<div style="position:absolute;left:415px;top:540px;width:687px;height:24px;background:#CBCBCB;"></div>
<div style="position:absolute;left:415px;top:565px;width:687px;height:4px;background:#CBCBCB;"></div>
<div style="position:absolute;left:415px;top:570px;width:687px;height:22px;background:#FEEBD8;"></div>
<div style="position:absolute;left:415px;top:398px;width:687px;height:1px;background:#000;"></div>
<div style="position:absolute;left:415px;top:399px;width:687px;height:1px;background:rgba(0,0,0,0.25);"></div>
<div style="position:absolute;left:415px;top:421px;width:687px;height:1px;background:#000;"></div>
<div style="position:absolute;left:415px;top:422px;width:687px;height:1px;background:rgba(0,0,0,0.25);"></div>
<div style="position:absolute;left:415px;top:426px;width:687px;height:1px;background:#000;"></div>
<div style="position:absolute;left:415px;top:427px;width:687px;height:1px;background:rgba(0,0,0,0.25);"></div>
<div style="position:absolute;left:415px;top:450px;width:687px;height:1px;background:#000;"></div>
<div style="position:absolute;left:415px;top:451px;width:687px;height:1px;background:rgba(0,0,0,0.25);"></div>
<div style="position:absolute;left:415px;top:475px;width:687px;height:1px;background:#000;"></div>
<div style="position:absolute;left:415px;top:476px;width:687px;height:1px;background:rgba(0,0,0,0.25);"></div>
<div style="position:absolute;left:415px;top:482px;width:687px;height:1px;background:#000;"></div>
<div style="position:absolute;left:415px;top:483px;width:687px;height:1px;background:rgba(0,0,0,0.25);"></div>
<div style="position:absolute;left:415px;top:508px;width:687px;height:1px;background:#000;"></div>
<div style="position:absolute;left:415px;top:509px;width:687px;height:1px;background:rgba(0,0,0,0.25);"></div>
<div style="position:absolute;left:415px;top:515px;width:687px;height:1px;background:#000;"></div>
<div style="position:absolute;left:415px;top:516px;width:687px;height:1px;background:rgba(0,0,0,0.25);"></div>
<div style="position:absolute;left:415px;top:539px;width:687px;height:1px;background:#000;"></div>
<div style="position:absolute;left:415px;top:540px;width:687px;height:1px;background:rgba(0,0,0,0.25);"></div>
<div style="position:absolute;left:415px;top:564px;width:687px;height:1px;background:#000;"></div>
<div style="position:absolute;left:415px;top:565px;width:687px;height:1px;background:rgba(0,0,0,0.25);"></div>
<div style="position:absolute;left:415px;top:569px;width:687px;height:1px;background:#000;"></div>
<div style="position:absolute;left:415px;top:570px;width:687px;height:1px;background:rgba(0,0,0,0.25);"></div>
<div style="position:absolute;left:415px;top:592px;width:687px;height:1px;background:#000;"></div>
<div style="position:absolute;left:415px;top:593px;width:687px;height:1px;background:rgba(0,0,0,0.25);"></div>
<div style="position:absolute;left:415px;top:495px;width:687px;height:1px;background:#F00;"></div>
<div style="position:absolute;left:415px;top:496px;width:687px;height:1px;background:rgba(255,0,0,0.35);"></div>
<div style="position:absolute;left:524px;top:493px;width:1px;height:2px;background:#F00;"></div>
<div style="position:absolute;left:634px;top:493px;width:1px;height:2px;background:#F00;"></div>
<div style="position:absolute;left:743px;top:493px;width:1px;height:2px;background:#F00;"></div>
<div style="position:absolute;left:853px;top:493px;width:1px;height:2px;background:#F00;"></div>
<div style="position:absolute;left:963px;top:493px;width:1px;height:2px;background:#F00;"></div>
<div style="position:absolute;left:1073px;top:493px;width:1px;height:2px;background:#F00;"></div>
<div style="position:absolute;left:413px;top:172px;width:2px;height:652px;background:#000;"></div>
<div style="position:absolute;left:413px;top:823px;width:689px;height:2px;background:#000;"></div>
<div style="position:absolute;left:414px;top:399px;width:1px;height:193px;background:repeating-linear-gradient(#000 0 3px,#fff 3px 6px);"></div>
<div style="position:absolute;left:413px;top:494px;width:3px;height:3px;background:#FFE000;"></div>
<svg style="position:absolute;left:776px;top:282px;" width="14" height="22" viewBox="0 0 14 22"><path d="M2.3 2.2 V18.6 L6.3 15.2 L9 20.6 L11.8 19.6 L9.6 14.6 L13.8 13.8 Z" fill="#fff" stroke="#000" stroke-width="1.1" stroke-linejoin="round"/></svg>
<div style="position:absolute;left:274px;top:852px;width:830px;height:21px;background:#fff;"></div>
<div style="position:absolute;left:274px;top:873px;width:830px;height:1px;background:#DCDCDC;"></div>
<div style="position:absolute;left:280px;top:853px;width:107px;height:18px;background:#F0F0F0;border:1.5px solid #111;border-top:none;box-sizing:border-box;"></div>
<div style="position:absolute;left:280px;top:853px;width:1.5px;height:1px;background:#111;"></div>
<div class="t" style="left:285px;top:856px;font-size:11px;color:#111;font-weight:normal;">км 0,000 - км 1,000</div>
<div class="t" style="left:391px;top:856px;font-size:11px;color:#111;font-weight:normal;">км 1,000 - км 2,000</div>
<div style="position:absolute;left:492px;top:854px;width:1px;height:15px;background:#A0A0A0;"></div>
<div class="t" style="left:497px;top:856px;font-size:11px;color:#111;font-weight:normal;">км 2,000 - км 3,000</div>
<div style="position:absolute;left:598px;top:854px;width:1px;height:15px;background:#A0A0A0;"></div>
<div class="t" style="left:603px;top:856px;font-size:11px;color:#111;font-weight:normal;">км 3,000 - км 4,000</div>
<div style="position:absolute;left:704px;top:854px;width:1px;height:15px;background:#A0A0A0;"></div>
<div class="t" style="left:709px;top:856px;font-size:11px;color:#111;font-weight:normal;">км 4,000 - км 5,000</div>
<div style="position:absolute;left:810px;top:854px;width:1px;height:15px;background:#A0A0A0;"></div>
<div class="t" style="left:815px;top:856px;font-size:11px;color:#111;font-weight:normal;">км 5,000 - км 6,000</div>
<div style="position:absolute;left:916px;top:854px;width:1px;height:15px;background:#A0A0A0;"></div>
<div class="t" style="left:921px;top:856px;font-size:11px;color:#111;font-weight:normal;">км 6,000 - км 7,000</div>
<div style="position:absolute;left:1022px;top:854px;width:1px;height:15px;background:#A0A0A0;"></div>
<div style="position:absolute;left:1026px;top:852px;width:41px;height:20px;overflow:hidden;"><div class="t" style="left:0;top:4px;font-size:11px;color:#111">км 7,000 - км 8,000</div></div>
<div style="position:absolute;left:1072px;top:855px;width:15px;height:15px;background:#fff;border:1px solid #ADADAD;box-sizing:border-box;"></div>
<div style="position:absolute;left:1088px;top:855px;width:15px;height:15px;background:#fff;border:1px solid #ADADAD;box-sizing:border-box;"></div>
<svg style="position:absolute;left:1076px;top:858px;" width="6" height="9" viewBox="0 0 6 9"><path d="M5 0 V9 L0 4.5 Z" fill="#A0A0A0"/></svg>
<svg style="position:absolute;left:1092px;top:858px;" width="6" height="9" viewBox="0 0 6 9"><path d="M0.5 0 V9 L5.5 4.5 Z" fill="#000"/></svg>
<div style="position:absolute;left:1104px;top:171px;width:495px;height:702px;background:#F0F0F0;"></div>
<div style="position:absolute;left:1105px;top:171px;width:493px;height:1px;background:#D9D9D9;"></div>
<div style="position:absolute;left:1105px;top:171px;width:1px;height:700px;background:#D9D9D9;"></div>
<div style="position:absolute;left:1597px;top:171px;width:1px;height:700px;background:#D9D9D9;"></div>
<svg style="position:absolute;left:1114px;top:181px;" width="16" height="17" viewBox="0 0 16 17"><rect x="0.5" y="0.5" width="15" height="16" fill="#fff" stroke="#666"/><rect x="0.5" y="0" width="15" height="1.8" fill="#3D77C0"/><rect x="2.5" y="3.5" width="11" height="11" fill="none" stroke="#888" stroke-width="0.9"/><path d="M4 7 H6 M4 9.5 H6 M4 12 H6" stroke="#999"/><path d="M7 7 H12 M7 9.5 H12 M7 12 H12" stroke="#3D77C0" stroke-width="1.1"/></svg>
<div class="t" style="left:1134px;top:184px;font-size:11px;color:#111;font-weight:bold;letter-spacing:0.4px;">Свойства</div>
<svg style="position:absolute;left:1552px;top:185px;" width="10" height="11" viewBox="0 0 10 11"><path d="M1 0.5 H9 M2 0.5 L4.5 4.5 L1.5 7.5 H8.5 L5.5 4.5 L8 0.5 M5 7.5 V10.5" fill="none" stroke="#222" stroke-width="1.1"/></svg>
<svg style="position:absolute;left:1578px;top:186px;" width="8" height="8" viewBox="0 0 8 8"><path d="M0.5 0.5 L7.5 7.5 M7.5 0.5 L0.5 7.5" stroke="#222" stroke-width="1.1"/></svg>
<div style="position:absolute;left:1109px;top:208px;width:485px;height:25px;background:#fff;"></div>
<div style="position:absolute;left:1115px;top:211px;width:118px;height:21px;background:#F0F0F0;"></div>
<svg style="position:absolute;left:1118px;top:212px;" width="16" height="16" viewBox="0 0 16 16">
<path d="M5.3 0 H10.3 L15 11.8 H0.6 Z" fill="#808080"/>
<rect x="0.5" y="11.6" width="14.6" height="2.4" fill="#3C3C3C"/>
<rect x="7.1" y="1" width="1.4" height="1.4" fill="#fff"/>
<rect x="7" y="3.4" width="1.6" height="2.6" fill="#fff"/>
<rect x="6.8" y="7.4" width="2" height="3.6" fill="#fff"/>
</svg>
<div class="t" style="left:1140px;top:217px;font-size:11px;color:#111;font-weight:normal;">Основная дорога</div>
<div style="position:absolute;left:1232px;top:211px;width:1px;height:21px;background:#111;"></div>
<div style="position:absolute;left:1110px;top:233px;width:484px;height:635px;background:#fff;border:1px solid #828790;border-right:2px solid #8A9099;border-bottom:2px solid #8A9099;box-sizing:border-box;"></div>
<div style="position:absolute;left:1105px;top:871px;width:493px;height:1px;background:#D6D6D6;"></div>
<div style="position:absolute;left:1112px;top:234px;width:479px;height:18px;background:#FFFDC0;"></div>
<div style="position:absolute;left:1112px;top:252px;width:479px;height:1px;background:#C2C2C2;"></div>
<svg style="position:absolute;left:1117px;top:239px;" width="9" height="9" viewBox="0 0 9 9"><rect x="0.5" y="0.5" width="8" height="8" fill="#fff" stroke="#8C9BAA"/><path d="M2 4.5 H7" stroke="#000" stroke-width="1"/></svg>
<svg style="position:absolute;left:1126px;top:243px;" width="7" height="1" viewBox="0 0 7 1"><path d="M0 0.5 H7" stroke="#8E8E8E" stroke-dasharray="1 1"/></svg>
<svg style="position:absolute;left:1133px;top:235px;" width="17" height="16" viewBox="0 0 17 16"><path d="M1.8 12 C 3 8, 5 5.5, 6.8 6.5 C 8.5 7.5, 9 10.5, 10.8 10.2 C 12.8 9.8, 14 6, 15.5 4.8" fill="none" stroke="#E8401C" stroke-width="2.4" stroke-linecap="round"/></svg>
<div class="t" style="left:1154px;top:238px;font-size:11px;color:#000;font-weight:bold;letter-spacing:0.35px;">Параметры оси</div>
<div style="position:absolute;left:1171px;top:270px;width:420px;height:1px;background:#C2C2C2;"></div>
<div style="position:absolute;left:1364px;top:253px;width:227px;height:17px;background:#EFEFEF;"></div>
<div style="position:absolute;left:1363px;top:252px;width:1px;height:18px;background:#C2C2C2;"></div>
<svg style="position:absolute;left:1141px;top:261px;" width="13" height="1" viewBox="0 0 13 1"><path d="M0 0.5 H13" stroke="#8E8E8E" stroke-dasharray="1 1"/></svg>
<svg style="position:absolute;left:1154px;top:253px;" width="17" height="16" viewBox="0 0 17 16"><text x="0.2" y="14" font-family="Liberation Serif" font-size="14" letter-spacing="-0.6" fill="#505050">Aa</text></svg>
<div class="t" style="left:1173px;top:256px;font-size:11px;color:#111;font-weight:normal;">Подпись на карте</div>
<div class="t" style="left:1366px;top:257px;font-size:11px;color:#0000F8;font-weight:normal;">Основная дорога</div>
<div style="position:absolute;left:1569px;top:254px;width:22px;height:15px;background:#E2E2E2;border:1px solid #B8B8B8;box-sizing:border-box;"></div>
<svg style="position:absolute;left:1572px;top:255px;" width="16" height="13" viewBox="0 0 16 13"><path d="M4 4 L3 8.5 L7.5 8 M3.5 8 Q7 3 13 7" fill="none" stroke="#8FB4D8" stroke-width="1.2"/></svg>
<div style="position:absolute;left:1171px;top:288px;width:420px;height:1px;background:#C2C2C2;"></div>
<div style="position:absolute;left:1364px;top:271px;width:227px;height:17px;background:#EFEFEF;"></div>
<div style="position:absolute;left:1363px;top:270px;width:1px;height:18px;background:#C2C2C2;"></div>
<svg style="position:absolute;left:1141px;top:279px;" width="13" height="1" viewBox="0 0 13 1"><path d="M0 0.5 H13" stroke="#8E8E8E" stroke-dasharray="1 1"/></svg>
<svg style="position:absolute;left:1154px;top:271px;" width="17" height="16" viewBox="0 0 17 16"><path d="M0.3 15.6 L1.5 12.1 L3.9 14.3 Z" fill="#2F73C8"/><path d="M3 12.9 L11.3 4.8" stroke="#2F73C8" stroke-width="2.9"/><path d="M12.8 3.2 L14.2 1.9" stroke="#2F73C8" stroke-width="2.4" stroke-linecap="round"/></svg>
<div class="t" style="left:1173px;top:274px;font-size:11px;color:#111;font-weight:normal;">Только чтение</div>
<div style="position:absolute;left:1365px;top:272px;width:15px;height:15px;background:#fff;border:2px solid #333;box-sizing:border-box;"></div>
<div style="position:absolute;left:1171px;top:306px;width:420px;height:1px;background:#C2C2C2;"></div>
<div style="position:absolute;left:1364px;top:289px;width:227px;height:17px;background:#EFEFEF;"></div>
<div style="position:absolute;left:1363px;top:288px;width:1px;height:18px;background:#C2C2C2;"></div>
<svg style="position:absolute;left:1141px;top:297px;" width="13" height="1" viewBox="0 0 13 1"><path d="M0 0.5 H13" stroke="#8E8E8E" stroke-dasharray="1 1"/></svg>
<svg style="position:absolute;left:1154px;top:289px;" width="17" height="16" viewBox="0 0 17 16"><path d="M7.2 1.1 A5.2 5.2 0 0 0 7.2 11.5" fill="#fff" stroke="#EE7A40" stroke-width="1"/><path d="M7.2 1.1 A5.2 5.2 0 0 1 7.2 11.5 Z" fill="#E8452A"/><path d="M7.2 11.5 V16" stroke="#E8452A" stroke-width="1.3"/><text x="0" y="16" font-family="Liberation Sans" font-size="6.5" font-weight="bold" fill="#111">0,</text></svg>
<div class="t" style="left:1173px;top:292px;font-size:11px;color:#111;font-weight:normal;">Начало оси, км</div>
<div class="t" style="left:1366px;top:293px;font-size:11px;color:#0000F8;font-weight:normal;">0,000</div>
<div style="position:absolute;left:1171px;top:324px;width:420px;height:1px;background:#C2C2C2;"></div>
<div style="position:absolute;left:1364px;top:307px;width:227px;height:17px;background:#EFEFEF;"></div>
<div style="position:absolute;left:1363px;top:306px;width:1px;height:18px;background:#C2C2C2;"></div>
<svg style="position:absolute;left:1141px;top:315px;" width="13" height="1" viewBox="0 0 13 1"><path d="M0 0.5 H13" stroke="#8E8E8E" stroke-dasharray="1 1"/></svg>
<svg style="position:absolute;left:1154px;top:307px;" width="17" height="16" viewBox="0 0 17 16"><path d="M7.2 1.1 A5.2 5.2 0 0 0 7.2 11.5" fill="#fff" stroke="#EE7A40" stroke-width="1"/><path d="M7.2 1.1 A5.2 5.2 0 0 1 7.2 11.5 Z" fill="#E8452A"/><path d="M7.2 11.5 V16" stroke="#E8452A" stroke-width="1.3"/><text x="0" y="16" font-family="Liberation Sans" font-size="6.5" font-weight="bold" fill="#111">0,</text></svg>
<div class="t" style="left:1173px;top:310px;font-size:11px;color:#111;font-weight:normal;">Конец оси, км</div>
<div class="t" style="left:1366px;top:311px;font-size:11px;color:#0000F8;font-weight:normal;">10,000</div>
<div style="position:absolute;left:1171px;top:342px;width:420px;height:1px;background:#C2C2C2;"></div>
<div style="position:absolute;left:1364px;top:325px;width:227px;height:17px;background:#EFEFEF;"></div>
<div style="position:absolute;left:1363px;top:324px;width:1px;height:18px;background:#C2C2C2;"></div>
<svg style="position:absolute;left:1141px;top:333px;" width="13" height="1" viewBox="0 0 13 1"><path d="M0 0.5 H13" stroke="#8E8E8E" stroke-dasharray="1 1"/></svg>
<svg style="position:absolute;left:1154px;top:325px;" width="17" height="16" viewBox="0 0 17 16"><path d="M0.5 8.3 L5.3 3.3 L8.7 7 L13.7 1.7" fill="none" stroke="#6A6A6A" stroke-width="1.5"/><path d="M2.6 10.5 V14.6 H5.2" fill="none" stroke="#111" stroke-width="1.1"/></svg>
<div class="t" style="left:1173px;top:328px;font-size:11px;color:#111;font-weight:normal;">Длина оси, км</div>
<div class="t" style="left:1366px;top:329px;font-size:11px;color:#0000F8;font-weight:normal;">10,000</div>
<div style="position:absolute;left:1171px;top:360px;width:420px;height:1px;background:#C2C2C2;"></div>
<div style="position:absolute;left:1364px;top:343px;width:227px;height:17px;background:#EFEFEF;"></div>
<div style="position:absolute;left:1363px;top:342px;width:1px;height:18px;background:#C2C2C2;"></div>
<svg style="position:absolute;left:1141px;top:351px;" width="13" height="1" viewBox="0 0 13 1"><path d="M0 0.5 H13" stroke="#8E8E8E" stroke-dasharray="1 1"/></svg>
<svg style="position:absolute;left:1154px;top:343px;" width="17" height="16" viewBox="0 0 17 16"><g fill="none" stroke="#3F7CC2" stroke-width="0.95"><path d="M6 1.2 H15.5 L10 7.3 H0.6 Z"/><path d="M12.2 5.2 H15.5 L10 11.3 H0.6 L3 8.6"/><path d="M12.2 9.2 H15.5 L10 15.3 H0.6 L3 12.6"/></g></svg>
<div class="t" style="left:1173px;top:346px;font-size:11px;color:#111;font-weight:normal;">Уровень по высоте</div>
<div class="t" style="left:1366px;top:347px;font-size:11px;color:#0000F8;font-weight:normal;">Базовый уровень</div>
<div style="position:absolute;left:1112px;top:361px;width:479px;height:17px;background:#FFFDC0;"></div>
<div style="position:absolute;left:1112px;top:378px;width:479px;height:1px;background:#C2C2C2;"></div>
<svg style="position:absolute;left:1121px;top:369px;" width="12" height="1" viewBox="0 0 12 1"><path d="M0 0.5 H12" stroke="#8E8E8E" stroke-dasharray="1 1"/></svg>
<svg style="position:absolute;left:1133px;top:361px;" width="17" height="16" viewBox="0 0 17 16"><g fill="none" stroke-linecap="butt"><path d="M1.7 12.8 L15 1.8 M8.6 7 L15 13.8" stroke="#222" stroke-width="4.4"/><path d="M1.7 12.8 L15 1.8 M8.6 7 L15 13.8" stroke="#8C8C8C" stroke-width="2.8"/><path d="M2.5 12.1 L14.3 2.4 M9.2 7.5 L14.4 13.1" stroke="#E0E0E0" stroke-width="0.5"/></g></svg>
<div class="t" style="left:1154px;top:364px;font-size:11px;color:#000;font-weight:bold;letter-spacing:0.35px;">Примыкания начала и конца</div>
<div style="position:absolute;left:1569px;top:362px;width:22px;height:15px;background:#E2E2E2;border:1px solid #B8B8B8;box-sizing:border-box;"></div>
<svg style="position:absolute;left:1572px;top:363px;" width="16" height="13" viewBox="0 0 16 13"><path d="M8 1.5 V11.5 M3 6.5 H13" stroke="#3E8A10" stroke-width="2.6"/></svg>
<div style="position:absolute;left:1112px;top:379px;width:479px;height:17px;background:#FFFDC0;"></div>
<div style="position:absolute;left:1112px;top:396px;width:479px;height:1px;background:#C2C2C2;"></div>
<svg style="position:absolute;left:1117px;top:383px;" width="9" height="9" viewBox="0 0 9 9"><rect x="0.5" y="0.5" width="8" height="8" fill="#fff" stroke="#8C9BAA"/><path d="M2 4.5 H7" stroke="#000" stroke-width="1"/></svg>
<svg style="position:absolute;left:1126px;top:387px;" width="7" height="1" viewBox="0 0 7 1"><path d="M0 0.5 H7" stroke="#8E8E8E" stroke-dasharray="1 1"/></svg>
<svg style="position:absolute;left:1133px;top:379px;" width="17" height="16" viewBox="0 0 17 16"><rect x="2.1" y="0.8" width="12.6" height="13.6" rx="1.5" fill="#fff" stroke="#707070" stroke-width="1"/><rect x="4.2" y="2.4" width="7.6" height="1.6" fill="#3D77C0"/><g fill="#B8B8B8"><rect x="4" y="5.6" width="2" height="1.8"/><rect x="7.4" y="5.6" width="2" height="1.8"/><rect x="10.8" y="5.6" width="2" height="1.8"/><rect x="4" y="8.6" width="2" height="1.8"/><rect x="7.4" y="8.6" width="2" height="1.8"/><rect x="10.8" y="8.6" width="2" height="1.8"/></g><rect x="4" y="11.4" width="5.4" height="1.6" fill="#707070"/><rect x="10.8" y="11.4" width="2" height="1.6" fill="#707070"/></svg>
<div class="t" style="left:1154px;top:382px;font-size:11px;color:#000;font-weight:bold;letter-spacing:0.35px;">Расчётные параметры</div>
<div style="position:absolute;left:1569px;top:380px;width:22px;height:15px;background:#E2E2E2;border:1px solid #B8B8B8;box-sizing:border-box;"></div>
<svg style="position:absolute;left:1572px;top:381px;" width="16" height="13" viewBox="0 0 16 13"><path d="M3 12 L13 2" stroke="#3D77C0" stroke-width="1.8"/><path d="M2 12.5 L3 10.5 L4.5 12 Z" fill="#333"/></svg>
<div style="position:absolute;left:1171px;top:414px;width:420px;height:1px;background:#C2C2C2;"></div>
<div style="position:absolute;left:1364px;top:397px;width:227px;height:17px;background:#EFEFEF;"></div>
<div style="position:absolute;left:1363px;top:396px;width:1px;height:18px;background:#C2C2C2;"></div>
<svg style="position:absolute;left:1141px;top:405px;" width="13" height="1" viewBox="0 0 13 1"><path d="M0 0.5 H13" stroke="#8E8E8E" stroke-dasharray="1 1"/></svg>
<svg style="position:absolute;left:1154px;top:397px;" width="17" height="16" viewBox="0 0 17 16"><rect x="0.3" y="1" width="14.5" height="14.5" rx="1.8" fill="#0000F0"/><path d="M7.5 2.5 L11.3 8.8 H9 V14.6 H6 V8.8 H3.7 Z" fill="#fff"/></svg>
<div class="t" style="left:1173px;top:400px;font-size:11px;color:#111;font-weight:normal;">Направление движения</div>
<div class="t" style="left:1366px;top:401px;font-size:11px;color:#0000F8;font-weight:normal;">Прямое и обратное</div>
<div style="position:absolute;left:1171px;top:432px;width:420px;height:1px;background:#C2C2C2;"></div>
<div style="position:absolute;left:1364px;top:415px;width:227px;height:17px;background:#EFEFEF;"></div>
<div style="position:absolute;left:1363px;top:414px;width:1px;height:18px;background:#C2C2C2;"></div>
<svg style="position:absolute;left:1141px;top:423px;" width="13" height="1" viewBox="0 0 13 1"><path d="M0 0.5 H13" stroke="#8E8E8E" stroke-dasharray="1 1"/></svg>
<svg style="position:absolute;left:1154px;top:415px;" width="17" height="16" viewBox="0 0 17 16"><path d="M6.5 3.8 Q7.5 0.8 8.5 3.8" fill="none" stroke="#555" stroke-width="1"/><path d="M1.6 5.6 H13.4" stroke="#333" stroke-width="1.3"/><path d="M2.2 5.6 V7 M12.8 5.6 V7" stroke="#333" stroke-width="1"/><path d="M2.6 15.6 L5.2 7.2 H6.9 L6.5 15.6 Z M12.4 15.6 L9.8 7.2 H8.1 L8.5 15.6 Z" fill="#444"/></svg>
<div class="t" style="left:1173px;top:418px;font-size:11px;color:#111;font-weight:normal;">Категория</div>
<div class="t" style="left:1366px;top:419px;font-size:11px;color:#0000F8;font-weight:normal;font-family:"Liberation Serif", serif;font-size:12px;">III</div>
<div style="position:absolute;left:1171px;top:450px;width:420px;height:1px;background:#C2C2C2;"></div>
<div style="position:absolute;left:1364px;top:433px;width:227px;height:17px;background:#EFEFEF;"></div>
<div style="position:absolute;left:1363px;top:432px;width:1px;height:18px;background:#C2C2C2;"></div>
<svg style="position:absolute;left:1141px;top:441px;" width="13" height="1" viewBox="0 0 13 1"><path d="M0 0.5 H13" stroke="#8E8E8E" stroke-dasharray="1 1"/></svg>
<svg style="position:absolute;left:1154px;top:433px;" width="17" height="16" viewBox="0 0 17 16"><path d="M0.3 15.5 V8.5 Q0.8 7 2.5 7 Q4 7 4.6 8.5 V13 H6 V7 L7.7 1.5 L9.4 7 V13 H10.6 V8 Q11 6.5 12.5 6.5 Q14.5 6.5 15 8 V15.5 Z" fill="#5A5A5A"/></svg>
<div class="t" style="left:1173px;top:436px;font-size:11px;color:#111;font-weight:normal;">Населённый пункт</div>
<div style="position:absolute;left:1365px;top:434px;width:15px;height:15px;background:#fff;border:2px solid #333;box-sizing:border-box;"></div>
<div style="position:absolute;left:1152px;top:451px;width:439px;height:17px;background:#C0FEC0;"></div>
<div style="position:absolute;left:1152px;top:468px;width:439px;height:1px;background:#C2C2C2;"></div>
<svg style="position:absolute;left:1137px;top:455px;" width="9" height="9" viewBox="0 0 9 9"><rect x="0.5" y="0.5" width="8" height="8" fill="#fff" stroke="#8C9BAA"/><path d="M2 4.5 H7" stroke="#000" stroke-width="1"/></svg>
<div class="t" style="left:1153px;top:454px;font-size:11px;color:#111;font-weight:normal;">Ограничения</div>
<div style="position:absolute;left:1569px;top:452px;width:22px;height:15px;background:#E2E2E2;border:1px solid #B8B8B8;box-sizing:border-box;"></div>
<svg style="position:absolute;left:1572px;top:453px;" width="16" height="13" viewBox="0 0 16 13"><path d="M9.5 1 H13 L9 5.5 H12 L4 12 L7 6.5 H4.5 Z" fill="#E8501C"/></svg>
<div style="position:absolute;left:1191px;top:486px;width:400px;height:1px;background:#C2C2C2;"></div>
<div style="position:absolute;left:1364px;top:469px;width:227px;height:17px;background:#EFEFEF;"></div>
<div style="position:absolute;left:1363px;top:468px;width:1px;height:18px;background:#C2C2C2;"></div>
<svg style="position:absolute;left:1161px;top:477px;" width="13" height="1" viewBox="0 0 13 1"><path d="M0 0.5 H13" stroke="#8E8E8E" stroke-dasharray="1 1"/></svg>
<svg style="position:absolute;left:1174px;top:469px;" width="17" height="16" viewBox="0 0 17 16"><circle cx="7.8" cy="8" r="6.8" fill="#fff" stroke="#E8000A" stroke-width="1.7"/><text x="7.8" y="10.9" text-anchor="middle" font-family="Liberation Sans" font-size="8" font-weight="bold" letter-spacing="-0.4" fill="#222">50</text></svg>
<div class="t" style="left:1193px;top:472px;font-size:11px;color:#111;font-weight:normal;">Скорость</div>
<div class="t" style="left:1366px;top:473px;font-size:11px;color:#0000F8;font-weight:normal;">90</div>
<div style="position:absolute;left:1191px;top:504px;width:400px;height:1px;background:#C2C2C2;"></div>
<div style="position:absolute;left:1364px;top:487px;width:227px;height:17px;background:#EFEFEF;"></div>
<div style="position:absolute;left:1363px;top:486px;width:1px;height:18px;background:#C2C2C2;"></div>
<svg style="position:absolute;left:1161px;top:495px;" width="13" height="1" viewBox="0 0 13 1"><path d="M0 0.5 H13" stroke="#8E8E8E" stroke-dasharray="1 1"/></svg>
<svg style="position:absolute;left:1174px;top:487px;" width="17" height="16" viewBox="0 0 17 16"><path d="M2 15 L8 3 L14 15" fill="none" stroke="#444" stroke-width="1"/><path d="M4 8 Q8 12 12 8" fill="none" stroke="#2030D0" stroke-width="1.2"/><path d="M5 8 Q8 6 11 8" fill="none" stroke="#E00" stroke-width="1"/><path d="M8 0 V2" stroke="#444" stroke-dasharray="1 1"/></svg>
<div class="t" style="left:1193px;top:490px;font-size:11px;color:#111;font-weight:normal;letter-spacing:-0.2px;">Наименьший радиус в плане</div>
<div class="t" style="left:1366px;top:491px;font-size:11px;color:#0000F8;font-weight:normal;">300</div>
<div style="position:absolute;left:1192px;top:505px;width:399px;height:17px;background:#BFFDFE;"></div>
<div style="position:absolute;left:1192px;top:522px;width:399px;height:1px;background:#C2C2C2;"></div>
<svg style="position:absolute;left:1157px;top:509px;" width="9" height="9" viewBox="0 0 9 9"><rect x="0.5" y="0.5" width="8" height="8" fill="#fff" stroke="#8C9BAA"/><path d="M2 4.5 H7" stroke="#000" stroke-width="1"/><path d="M4.5 2 V7" stroke="#000" stroke-width="1"/></svg>
<svg style="position:absolute;left:1166px;top:513px;" width="8" height="1" viewBox="0 0 8 1"><path d="M0 0.5 H8" stroke="#8E8E8E" stroke-dasharray="1 1"/></svg>
<svg style="position:absolute;left:1174px;top:505px;" width="17" height="16" viewBox="0 0 17 16"><path d="M1 9 H16 M1 13 H16 M3 8 V16 M7 8 V16 M11 8 V16 M15 8 V16" stroke="#E00" stroke-width="1.4"/><path d="M1 7 Q8 3 16 7" fill="none" stroke="#333" stroke-width="1.2"/><path d="M5 1 V4 M9 1 V4 M13 1 V4" stroke="#E8A060" stroke-width="1"/></svg>
<div class="t" style="left:1193px;top:508px;font-size:11px;color:#111;font-weight:normal;">Продольный профиль</div>
<div style="position:absolute;left:1192px;top:523px;width:399px;height:17px;background:#BFFDFE;"></div>
<div style="position:absolute;left:1192px;top:540px;width:399px;height:1px;background:#C2C2C2;"></div>
<svg style="position:absolute;left:1157px;top:527px;" width="9" height="9" viewBox="0 0 9 9"><rect x="0.5" y="0.5" width="8" height="8" fill="#fff" stroke="#8C9BAA"/><path d="M2 4.5 H7" stroke="#000" stroke-width="1"/><path d="M4.5 2 V7" stroke="#000" stroke-width="1"/></svg>
<svg style="position:absolute;left:1166px;top:531px;" width="8" height="1" viewBox="0 0 8 1"><path d="M0 0.5 H8" stroke="#8E8E8E" stroke-dasharray="1 1"/></svg>
<svg style="position:absolute;left:1174px;top:523px;" width="17" height="16" viewBox="0 0 17 16"><path d="M9 1 L2 5 L9 8" fill="none" stroke="#333" stroke-width="1.3"/><path d="M1 10 Q8 8 16 11" fill="none" stroke="#333" stroke-width="1.2"/><path d="M1 15 H16 M4 11 V16 M8 11 V16 M12 11 V16" stroke="#E00" stroke-width="1.2"/><path d="M12 14 H16" stroke="#2A2" stroke-width="1.4"/></svg>
<div class="t" style="left:1193px;top:526px;font-size:11px;color:#111;font-weight:normal;">Видимость</div>
<div style="position:absolute;left:1112px;top:541px;width:479px;height:17px;background:#FFFDC0;"></div>
<div style="position:absolute;left:1112px;top:558px;width:479px;height:1px;background:#C2C2C2;"></div>
<svg style="position:absolute;left:1117px;top:545px;" width="9" height="9" viewBox="0 0 9 9"><rect x="0.5" y="0.5" width="8" height="8" fill="#fff" stroke="#8C9BAA"/><path d="M2 4.5 H7" stroke="#000" stroke-width="1"/><path d="M4.5 2 V7" stroke="#000" stroke-width="1"/></svg>
<svg style="position:absolute;left:1126px;top:549px;" width="7" height="1" viewBox="0 0 7 1"><path d="M0 0.5 H7" stroke="#8E8E8E" stroke-dasharray="1 1"/></svg>
<svg style="position:absolute;left:1133px;top:541px;" width="17" height="16" viewBox="0 0 17 16"><path d="M0.5 1.5 H11 L16.5 7 V15.5 H0.5 Z" fill="#fff" stroke="#777"/><path d="M11 1.5 V7 H16.5 M4 1.5 V12 H16.5 M0.5 6 H4 M9 12 V15.5 M13 12 V15.5" fill="none" stroke="#777" stroke-width="0.9"/></svg>
<div class="t" style="left:1154px;top:544px;font-size:11px;color:#000;font-weight:bold;letter-spacing:0.35px;">Параметры новых листов</div>
<div style="position:absolute;left:1569px;top:542px;width:22px;height:15px;background:#E2E2E2;border:1px solid #B8B8B8;box-sizing:border-box;"></div>
<svg style="position:absolute;left:1572px;top:543px;" width="16" height="13" viewBox="0 0 16 13"><path d="M9.5 1 H13 L9 5.5 H12 L4 12 L7 6.5 H4.5 Z" fill="#E8501C"/></svg>
<div style="position:absolute;left:1112px;top:559px;width:479px;height:17px;background:#FFFDC0;"></div>
<div style="position:absolute;left:1112px;top:576px;width:479px;height:1px;background:#C2C2C2;"></div>
<svg style="position:absolute;left:1121px;top:567px;" width="12" height="1" viewBox="0 0 12 1"><path d="M0 0.5 H12" stroke="#8E8E8E" stroke-dasharray="1 1"/></svg>
<svg style="position:absolute;left:1133px;top:559px;" width="17" height="16" viewBox="0 0 17 16"><rect x="1" y="0" width="15" height="16" fill="#E8B86A"/><rect x="1" y="0" width="3" height="16" fill="#333"/><rect x="13" y="0" width="3" height="16" fill="#333"/><g fill="#fff"><rect x="1.8" y="1.5" width="1.4" height="2"/><rect x="1.8" y="5.5" width="1.4" height="2"/><rect x="1.8" y="9.5" width="1.4" height="2"/><rect x="1.8" y="13" width="1.4" height="2"/><rect x="13.8" y="1.5" width="1.4" height="2"/><rect x="13.8" y="5.5" width="1.4" height="2"/><rect x="13.8" y="9.5" width="1.4" height="2"/><rect x="13.8" y="13" width="1.4" height="2"/></g><path d="M4 6 H13 V10 H4 Z" fill="#fff"/></svg>
<div class="t" style="left:1154px;top:562px;font-size:11px;color:#000;font-weight:bold;letter-spacing:0.35px;">Панорамное видео</div>
<div style="position:absolute;left:1569px;top:560px;width:22px;height:15px;background:#E2E2E2;border:1px solid #B8B8B8;box-sizing:border-box;"></div>
<svg style="position:absolute;left:1572px;top:561px;" width="16" height="13" viewBox="0 0 16 13"><path d="M8 1.5 V11.5 M3 6.5 H13" stroke="#3E8A10" stroke-width="2.6"/></svg>
<div style="position:absolute;left:1112px;top:577px;width:479px;height:17px;background:#FFFDC0;"></div>
<div style="position:absolute;left:1112px;top:594px;width:479px;height:1px;background:#C2C2C2;"></div>
<svg style="position:absolute;left:1117px;top:581px;" width="9" height="9" viewBox="0 0 9 9"><rect x="0.5" y="0.5" width="8" height="8" fill="#fff" stroke="#8C9BAA"/><path d="M2 4.5 H7" stroke="#000" stroke-width="1"/><path d="M4.5 2 V7" stroke="#000" stroke-width="1"/></svg>
<svg style="position:absolute;left:1126px;top:585px;" width="7" height="1" viewBox="0 0 7 1"><path d="M0 0.5 H7" stroke="#8E8E8E" stroke-dasharray="1 1"/></svg>
<svg style="position:absolute;left:1133px;top:577px;" width="17" height="16" viewBox="0 0 17 16"><rect x="1" y="0.5" width="15" height="15" fill="#fff" stroke="#777"/><rect x="2" y="1.5" width="13" height="11" fill="#5AA8E0"/><path d="M2 12 L6 7 L9 10 L11 8 L15 12 Z" fill="#C8E4F8"/><rect x="2" y="12" width="13" height="2.5" fill="#3A8A2A"/><circle cx="12" cy="4" r="1" fill="#F5A100"/></svg>
<div class="t" style="left:1154px;top:580px;font-size:11px;color:#000;font-weight:bold;letter-spacing:0.35px;">Изображения</div>
<svg style="position:absolute;left:1121px;top:248px;" width="1" height="337" viewBox="0 0 1 337"><path d="M0.5 0 V337" stroke="#8E8E8E" stroke-dasharray="1 1"/></svg>
<svg style="position:absolute;left:1141px;top:252px;" width="1" height="99" viewBox="0 0 1 99"><path d="M0.5 0 V99" stroke="#8E8E8E" stroke-dasharray="1 1"/></svg>
<svg style="position:absolute;left:1141px;top:396px;" width="1" height="63" viewBox="0 0 1 63"><path d="M0.5 0 V63" stroke="#8E8E8E" stroke-dasharray="1 1"/></svg>
<svg style="position:absolute;left:1161px;top:468px;" width="1" height="63" viewBox="0 0 1 63"><path d="M0.5 0 V63" stroke="#8E8E8E" stroke-dasharray="1 1"/></svg>
<svg style="position:absolute;left:1117px;top:239px;" width="9" height="9" viewBox="0 0 9 9"><rect x="0.5" y="0.5" width="8" height="8" fill="#fff" stroke="#8C9BAA"/><path d="M2 4.5 H7" stroke="#000" stroke-width="1"/></svg>
<svg style="position:absolute;left:1117px;top:383px;" width="9" height="9" viewBox="0 0 9 9"><rect x="0.5" y="0.5" width="8" height="8" fill="#fff" stroke="#8C9BAA"/><path d="M2 4.5 H7" stroke="#000" stroke-width="1"/></svg>
<svg style="position:absolute;left:1137px;top:455px;" width="9" height="9" viewBox="0 0 9 9"><rect x="0.5" y="0.5" width="8" height="8" fill="#fff" stroke="#8C9BAA"/><path d="M2 4.5 H7" stroke="#000" stroke-width="1"/></svg>
<svg style="position:absolute;left:1157px;top:509px;" width="9" height="9" viewBox="0 0 9 9"><rect x="0.5" y="0.5" width="8" height="8" fill="#fff" stroke="#8C9BAA"/><path d="M2 4.5 H7" stroke="#000" stroke-width="1"/><path d="M4.5 2 V7" stroke="#000" stroke-width="1"/></svg>
<svg style="position:absolute;left:1157px;top:527px;" width="9" height="9" viewBox="0 0 9 9"><rect x="0.5" y="0.5" width="8" height="8" fill="#fff" stroke="#8C9BAA"/><path d="M2 4.5 H7" stroke="#000" stroke-width="1"/><path d="M4.5 2 V7" stroke="#000" stroke-width="1"/></svg>
<svg style="position:absolute;left:1117px;top:545px;" width="9" height="9" viewBox="0 0 9 9"><rect x="0.5" y="0.5" width="8" height="8" fill="#fff" stroke="#8C9BAA"/><path d="M2 4.5 H7" stroke="#000" stroke-width="1"/><path d="M4.5 2 V7" stroke="#000" stroke-width="1"/></svg>
<svg style="position:absolute;left:1117px;top:581px;" width="9" height="9" viewBox="0 0 9 9"><rect x="0.5" y="0.5" width="8" height="8" fill="#fff" stroke="#8C9BAA"/><path d="M2 4.5 H7" stroke="#000" stroke-width="1"/><path d="M4.5 2 V7" stroke="#000" stroke-width="1"/></svg>
<div style="position:absolute;left:1px;top:873px;width:1598px;height:26px;background:#F4F4F4;"></div>
<div style="position:absolute;left:1px;top:873px;width:1598px;height:1px;background:#DCDCDC;"></div>
<svg style="position:absolute;left:8px;top:877px;" width="16" height="16" viewBox="0 0 16 16">
<path d="M5.3 0 H10.3 L15 11.8 H0.6 Z" fill="#808080"/>
<rect x="0.5" y="11.6" width="14.6" height="2.4" fill="#3C3C3C"/>
<rect x="7.1" y="1" width="1.4" height="1.4" fill="#fff"/>
<rect x="7" y="3.4" width="1.6" height="2.6" fill="#fff"/>
<rect x="6.8" y="7.4" width="2" height="3.6" fill="#fff"/>
</svg>
<div class="t" style="left:29px;top:880px;font-size:12px;color:#1A1A1A;font-weight:normal;">Исходное состояние</div>
<svg style="position:absolute;left:149px;top:884px;" width="8" height="5" viewBox="0 0 8 5"><path d="M0.5 0.5 L4 4 L7.5 0.5" fill="none" stroke="#333" stroke-width="1.1"/></svg>
<div style="position:absolute;left:157px;top:876px;width:1px;height:20px;background:#D0D0D0;"></div>
<div class="t" style="left:162px;top:880px;font-size:12px;color:#1A1A1A;font-weight:normal;">Активный километр:</div>
<div style="position:absolute;left:283px;top:876px;width:79px;height:20px;background:#fff;border:1px solid #DADADA;border-radius:3px;box-sizing:border-box;"></div>
<div class="t" style="left:286px;top:881px;font-size:12px;color:#1A1A1A;font-weight:normal;">0,000</div>
<svg style="position:absolute;left:348px;top:878px;" width="9" height="14" viewBox="0 0 9 14"><path d="M0.5 5 L4.5 1 L8.5 5 M0.5 9 L4.5 13 L8.5 9" fill="none" stroke="#333" stroke-width="1.1"/></svg>
<div style="position:absolute;left:364px;top:876px;width:1px;height:20px;background:#D0D0D0;"></div>
<div class="t" style="left:367px;top:880px;font-size:11px;color:#111;font-weight:normal;">Километр = 0,332 км; Смещение = -31,99 м</div>
<svg style="position:absolute;left:1588px;top:886px;" width="8" height="8" viewBox="0 0 8 8"><g fill="#777"><rect x="5" y="0" width="2" height="2"/><rect x="1" y="4" width="2" height="2"/><rect x="5" y="4" width="2" height="2"/><rect x="1" y="0" width="2" height="2"/></g></svg>
</body></html>
